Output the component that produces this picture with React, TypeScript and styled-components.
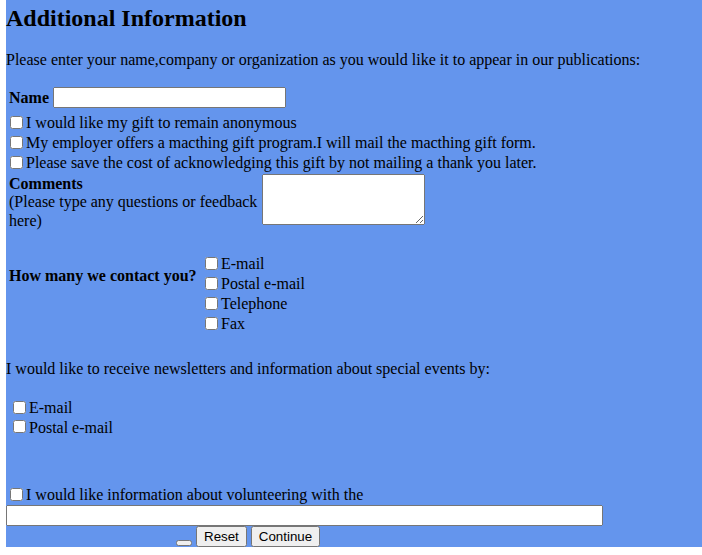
import React from "react";
import styled, { createGlobalStyle } from "styled-components";

const GlobalStyle = createGlobalStyle`
  html, body { margin: 0; padding: 0; background: #ffffff; }
  body {
    font-family: "Liberation Serif", "Times New Roman", serif;
    font-size: 16px;
    color: #000000;
  }
`;

const Page = styled.form`
  margin-left: 6px;
  padding-top: 4px;
  background: #6495ed;
  display: flex;
  flex-direction: column;
`;

const Title = styled.h2`
  margin: 0;
  font-size: 24px;
  line-height: 28px;
  font-weight: bold;
`;

const Paragraph = styled.p<{ $top: number; $lh: number }>`
  margin: ${(p) => p.$top}px 0 0;
  line-height: ${(p) => p.$lh}px;
`;

const NameRow = styled.div`
  margin-top: 18px;
  padding-left: 3px;
  height: 21px;
  display: flex;
  align-items: center;
  gap: 4px;
`;

const Label = styled.b`
  font-weight: bold;
  line-height: 18px;
`;

const TextInput = styled.input<{ $width: number }>`
  width: ${(p) => p.$width}px;
  height: 21px;
  box-sizing: border-box;
  margin: 0;
  flex: none;
`;

const CheckRow = styled.label<{ $indent: number; $h: number; $top?: number }>`
  display: flex;
  align-items: flex-start;
  height: ${(p) => p.$h}px;
  line-height: ${(p) => p.$h}px;
  padding-left: ${(p) => p.$indent}px;
  margin-top: ${(p) => p.$top ?? 0}px;
  white-space: nowrap;
`;

const Box = styled.input.attrs({ type: "checkbox" })<{ $mt: number }>`
  width: 13px;
  height: 13px;
  margin: ${(p) => p.$mt}px 3px 0 0;
  flex: none;
`;

const CommentsRow = styled.div`
  margin-top: 1.5px;
  padding-left: 3px;
  display: flex;
  align-items: flex-start;
  gap: 3px;
`;

const CommentsLabel = styled.div`
  width: 250px;
  padding-top: 1px;
  line-height: 18.4px;
`;

const CommentBox = styled.textarea`
  width: 163px;
  height: 51px;
  box-sizing: border-box;
  margin: 0;
  flex: none;
`;

const ContactRow = styled.div`
  margin-top: 24px;
  padding-left: 3px;
  display: grid;
  grid-template-columns: 192px auto;
  align-items: start;
`;

const ContactLabel = styled.b`
  margin-top: 12px;
  line-height: 20px;
  white-space: nowrap;
`;

const OptionList = styled.div<{ $top?: number }>`
  display: flex;
  flex-direction: column;
  margin-top: ${(p) => p.$top ?? 0}px;
`;

const ButtonRow = styled.div`
  display: flex;
  align-items: flex-end;
  gap: 4px;
  padding-left: 170px;
  height: 21px;
`;

const Button = styled.button<{ $empty?: boolean }>`
  font-family: "Liberation Sans", Arial, sans-serif;
  font-size: 13.333px;
  margin: 0 0 ${(p) => (p.$empty ? 1.5 : 0)}px;
  flex: none;
`;

type CheckProps = { text: string; indent: number; h?: number; top?: number };

const Check = ({ text, indent, h = 20, top }: CheckProps) => (
  <CheckRow $indent={indent} $h={h} $top={top}>
    <Box $mt={(h - 20) / 2 + 3} />
    <span>{text}</span>
  </CheckRow>
);

export default function App() {
  return (
    <>
      <GlobalStyle />
      <Page onSubmit={(e) => e.preventDefault()}>
        <Title>Additional Information</Title>
        <Paragraph $top={19} $lh={18}>
          Please enter your name,company or organization as you would like it to appear in our publications:
        </Paragraph>
        <NameRow>
          <Label>Name</Label>
          <TextInput type="text" $width={233} />
        </NameRow>
        <Check indent={4} top={4.5} text="I would like my gift to remain anonymous" />
        <Check indent={4} text="My employer offers a macthing gift program.I will mail the macthing gift form." />
        <Check indent={4} text="Please save the cost of acknowledging this gift by not mailing a thank you later." />
        <CommentsRow>
          <CommentsLabel>
            <Label>Comments</Label>
            <br />
            (Please type any questions or feedback here)
          </CommentsLabel>
          <CommentBox />
        </CommentsRow>
        <ContactRow>
          <ContactLabel>How many we contact you?</ContactLabel>
          <OptionList>
            <Check indent={4} text="E-mail" />
            <Check indent={4} text="Postal e-mail" />
            <Check indent={4} text="Telephone" />
            <Check indent={4} text="Fax" />
          </OptionList>
        </ContactRow>
        <Paragraph $top={24.6} $lh={20}>
          I would like to receive newsletters and information about special events by:
        </Paragraph>
        <OptionList $top={19.6}>
          <Check indent={7} h={19.4} text="E-mail" />
          <Check indent={7} h={19.4} text="Postal e-mail" />
        </OptionList>
        <Check indent={4} top={48.3} text="I would like information about volunteering with the" />
        <TextInput type="text" $width={597} />
        <ButtonRow>
          <Button type="button" $empty />
          <Button type="reset">Reset</Button>
          <Button type="submit">Continue</Button>
        </ButtonRow>
      </Page>
    </>
  );
}
